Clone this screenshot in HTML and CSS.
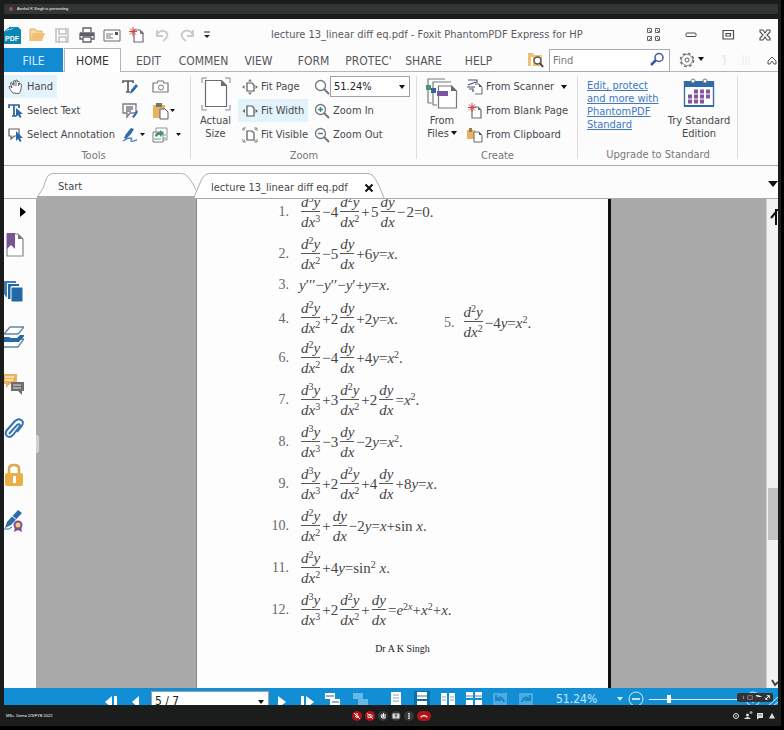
FILE: index.html
```html
<!DOCTYPE html>
<html lang="en">
<head>
<meta charset="utf-8">
<title>lecture 13_linear diff eq.pdf - Foxit PhantomPDF Express for HP</title>
<link rel="stylesheet" href="styles.css">
</head>
<body>
<div class="meeting">
  <header class="presenter"><div class="presenter-bar"><span class="presenter-dot"></span>Anshul K Singh is presenting</div></header>

  <div class="app">
    <div class="titlebar">
      <div class="quick">
        <svg class="logo" viewBox="0 0 17 17"><path d="M0 5 6 0H14L17 3V17H0Z" fill="#0a86b5"/><path d="M0 5 6 0 5 4Q8 3 11 0" fill="#fff" stroke="#0a86b5"/><text x="1" y="14" class="logo-text">PDF</text></svg>
        <button class="icon-btn" aria-label="Open"><svg viewBox="0 0 18 16"><path d="M2 14V2h5l1 2h6v3" fill="#f5d9a0" stroke="#dcae62"/><path d="M2 14 5 6h12l-3 8Z" fill="#f0c173"/></svg></button>
        <button class="icon-btn" aria-label="Save"><svg viewBox="0 0 18 16"><path d="M3 2h12v13H3Z M6 2v5h7V2 M6 15v-5h7v5" fill="none" stroke="#c3c1c8" stroke-width="1.6"/></svg></button>
        <button class="icon-btn" aria-label="Print"><svg viewBox="0 0 18 16"><path d="M5 5V1h8v4M2 6h14v6h-3M2 6v6h3M5 10h8v5H5Z" fill="#fff" stroke="#5d6068" stroke-width="1.3"/><path d="M2 6h14v3H2Z" fill="#5d6068"/></svg></button>
        <button class="icon-btn" aria-label="Email"><svg viewBox="0 0 18 16"><path d="M1 3h16v11H1Z" fill="#fff" stroke="#66686f"/><path d="M3 7h7M3 9h5M3 11h7" stroke="#777" /><path d="M12 5h3v3h-3Z" fill="#555"/></svg></button>
        <button class="icon-btn" aria-label="New"><svg viewBox="0 0 18 16"><path d="M6 3h6l3 3v9H6Z" fill="#fff" stroke="#6c6d73" stroke-width="1.2"/><path d="M12 3v4h4" fill="#777"/><path d="M5 0v9M1 4.500h8M2 1.500l6 6M8 1.500l-6 6" stroke="#d4453f"/></svg></button>
        <button class="icon-btn" aria-label="Undo"><svg viewBox="0 0 18 16"><path d="M4 3v6h6M4 9q-1-1 1-3q4-4 8-1q4 4-3 9" fill="none" stroke="#c9c9cd" stroke-width="1.8"/></svg></button>
        <button class="icon-btn" aria-label="Redo"><svg viewBox="0 0 18 16"><path d="M15 3v6H9M15 9q0-2-2-4q-4-3-8 0q-4 4 3 9" fill="none" stroke="#c9c9cd" stroke-width="1.8"/></svg></button>
        <button class="icon-btn slim" aria-label="Customize"><svg viewBox="0 0 8 16"><path d="M1 5h6" stroke="#222"/><path d="M1 8h6l-3 3Z" fill="#222"/></svg></button>
      </div>
      <h1 class="title">lecture 13_linear diff eq.pdf - Foxit PhantomPDF Express for HP</h1>
      <div class="window-btns">
        <button class="icon-btn" aria-label="Layout"><svg viewBox="0 0 16 16"><path d="M1.500 1.500h4v4h-4ZM9.500 1.500h4v4h-4ZM1.500 9.500h4v4h-4ZM9.500 9.500h4v4h-4ZM3 3l2 2M11 3l2 2M11 11l2 2M3 13l2-2" fill="none" stroke="#66666a"/></svg></button>
        <button class="icon-btn" aria-label="Minimize"><svg viewBox="0 0 16 16"><rect x="3" y="6" width="10" height="3.500" rx="1" fill="none" stroke="#4d4d50"/></svg></button>
        <button class="icon-btn" aria-label="Restore"><svg viewBox="0 0 16 16"><path d="M3 3.500h10.500v8.500H3Z M6 6.500h4.500v2.500H6Z" fill="none" stroke="#4d4d50" stroke-width="1.2"/></svg></button>
        <button class="icon-btn" aria-label="Close"><svg viewBox="0 0 16 16"><path d="M3 3h3l2 3 2-3h3v2l-3 3 3 3v2h-3L8 10l-2 3H3v-2l3-3-3-3Z" fill="none" stroke="#4d4d50" stroke-width="1.1"/></svg></button>
      </div>
    </div>

    <div class="menubar">
      <nav class="menu">
        <button class="file">FILE</button>
        <button class="home">HOME</button>
        <button>EDIT</button>
        <button>COMMEN</button>
        <button>VIEW</button>
        <button>FORM</button>
        <button>PROTEC'</button>
        <button>SHARE</button>
        <button>HELP</button>
      </nav>
      <div class="search">
        <svg class="i16" viewBox="0 0 16 16"><path d="M0 14V1h5l1 2h8v11Z" fill="#f0c173"/><path d="M3 14V5h2v9" fill="#fff"/><circle cx="9.500" cy="8.500" r="3.500" fill="#fff" stroke="#555" stroke-width="1.400"/><path d="m12 11 3 4" stroke="#444" stroke-width="2"/></svg>
        <label class="find"><input type="text" placeholder="Find" aria-label="Find"><svg class="i16" viewBox="0 0 16 16"><circle cx="10" cy="5.500" r="4" fill="#fff" stroke="#3c57a0" stroke-width="1.500"/><path d="M7 8 2 13" stroke="#3c57a0" stroke-width="2.500"/></svg></label>
        <button class="icon-btn gear" aria-label="Settings"><svg viewBox="0 0 26 16"><circle cx="8" cy="8" r="6.500" fill="none" stroke="#66666a" stroke-width="1.500" stroke-dasharray="2.800 2.300"/><circle cx="8" cy="8" r="5.500" fill="#fff" stroke="#77777b" stroke-width=".8"/><circle cx="8" cy="8" r="2" fill="none" stroke="#5a5a5e"/><path d="M19 5h6l-3 4Z" fill="#111"/></svg></button>
        <svg class="i16" viewBox="0 0 16 16"><path d="M4 3q5 4 2 10M6 3v3" stroke="#e2e2e5" fill="none"/></svg>
        <svg class="i16" viewBox="0 0 16 16"><path d="M4 3v10M7 3v10M10 5v8" stroke="#e9e9ec" fill="none"/></svg>
        <button class="icon-btn collapse" aria-label="Collapse ribbon"><svg viewBox="0 0 12 16"><path d="m2 9 4-4 4 4v3H8L6 9l-2 3H2Z" fill="none" stroke="#555"/></svg></button>
      </div>
    </div>

    <div class="ribbon">
      <section class="group tools">
        <div class="body">
          <div class="stack wide">
            <button class="cmd on"><svg class="i16" viewBox="0 0 16 16"><path d="M5 14Q1 10 1 7.500q1-1 3 1.500L2.500 4q1-2 2.500 2L5.500 2q1.500-1.500 2 1 0-2.500 1.500-2L9.500 3q1.500-1.500 2 .5v2q1.500-1.500 2 0L13 10q0 2-2 4.500Z M6 3v4M8 3v4M10.500 4v3" fill="#fff" stroke="#5f6368"/></svg>Hand</button>
            <button class="cmd"><svg class="i16" viewBox="0 0 16 16"><path d="M1 5V2h10v3M6 2v11M4 13h4" fill="none" stroke="#2c5f98" stroke-width="1.700"/><path d="M8 5v9l2-2 2 3 1.500-1-1.500-3h3Z" fill="#2b68a6"/></svg>Select Text</button>
            <button class="cmd"><svg class="i16" viewBox="0 0 16 16"><path d="M1 2h10v7H6L3 12V9H1Z" fill="#fff" stroke="#5c6068" stroke-width="1.200"/><path d="M8 4v10l2-2 2 3 1.500-1-1.500-3h3Z" fill="#2b68a6"/></svg>Select Annotation</button>
          </div>
          <div class="stack small">
            <button class="tool" aria-label="Typewriter"><svg viewBox="0 0 24 16"><path d="M1 4V2h10v2M6 2v11M4 13h4" fill="none" stroke="#5b5d62" stroke-width="1.700"/><path d="m8 15 1-4 5-6 2 2-5 6Z" fill="#2f6ba8"/></svg></button>
            <button class="tool" aria-label="Note"><svg viewBox="0 0 24 16"><path d="M1 1h13v9H8l-3 4v-4H1Z M4 4h7M4 6h7M4 8h5" fill="none" stroke="#777a83" stroke-width="1.300"/><path d="m10 14 5-7 1 2-4 6Z" fill="#2f6ba8"/></svg></button>
            <button class="tool" aria-label="Sign"><svg viewBox="0 0 24 16"><path d="m2 11 2-4 5-6 3 1-3 5-5 5Z" fill="#2f6ba8"/><path d="M1 14q4-3 7-3t1 2q-1 2 2 1l4-1" fill="none" stroke="#4a86bd" stroke-width="1.300"/><path d="M18 6h5l-2.500 3Z" fill="#111"/></svg></button>
          </div>
          <div class="stack small">
            <button class="tool" aria-label="Snapshot"><svg viewBox="0 0 28 16"><path d="M1 4h4l1-2h5l1 2h4v9H1Z" fill="#fff" stroke="#76777d" stroke-width="1.200"/><circle cx="9" cy="8.500" r="2.500" fill="none" stroke="#76777d"/></svg></button>
            <button class="tool" aria-label="Paste"><svg viewBox="0 0 28 16"><path d="M1 2h12v13H1Z" fill="#e6b363"/><path d="M4 0h6v4H4Z" fill="#7b7468"/><path d="M8 6h5l3 3v7H8Z" fill="#fff" stroke="#5d5e64"/><path d="M18 6h5l-2.500 3Z" fill="#111"/></svg></button>
            <button class="tool" aria-label="Stamp"><svg viewBox="0 0 28 16"><path d="M4 1h11v12H4Z" fill="#fff" stroke="#909399"/><path d="M1 5h10v10H1Z" fill="#fff" stroke="#77808a"/><path d="M3 9q0-4 5-4V3l4 3.500L8 10V8q-3 0-3 2Z" fill="#3f9a62"/><path d="M2 12h7M12 8h2M12 11h2" stroke="#6b9a7b"/><path d="M24 6h5l-2.500 3Z" fill="#111"/></svg></button>
          </div>
        </div>
        <h2>Tools</h2>
      </section>

      <section class="group zoom">
        <div class="body">
          <button class="big"><svg viewBox="0 0 30 34"><path d="M1 6V1h5M24 1h5v5M29 28v5h-5M6 33H1v-5" fill="none" stroke="#85878c"/><path d="M4.500 3.500h16l5 5v21h-21Z" fill="#fff" stroke="#6b6d73" stroke-width="1.200"/><path d="M20 3v6h6Z" fill="#6b6d73"/></svg><span>Actual Size</span></button>
          <div class="stack fit">
            <button class="cmd"><svg class="i16" viewBox="0 0 16 16"><path d="M5 4h5l2 2v6H5Z" fill="#fff" stroke="#55575c" stroke-width="1.200"/><path d="M6 2.500 8 0l2 2.500M6 13.500 8 16l2-2.500M2.500 6 0 8l2.500 2M13.500 6 16 8l-2.500 2" fill="#777"/></svg>Fit Page</button>
            <button class="cmd on"><svg class="i16" viewBox="0 0 16 16"><path d="M5 3h5l2 2v8H5Z" fill="#fff" stroke="#55575c" stroke-width="1.200"/><path d="M3 6 .500 8 3 10M13.500 6 16 8l-2.500 2" fill="#666"/></svg>Fit Width</button>
            <button class="cmd"><svg class="i16" viewBox="0 0 16 16"><path d="M5 4h5l2 2v7H5Z" fill="#fff" stroke="#55575c" stroke-width="1.200"/><path d="M1 4V1h3M1 1l2 2M12 1h3v3M15 1l-2 2M1 12v3h3M1 15l2-2M15 12v3h-3M15 15l-2-2" fill="none" stroke="#888"/></svg>Fit Visible</button>
          </div>
          <div class="stack">
            <div class="cmd flush"><svg class="i16" viewBox="0 0 16 16"><circle cx="6.500" cy="6.500" r="5" fill="#fff" stroke="#75777c" stroke-width="1.300"/><path d="m10 10 5 5" stroke="#75777c" stroke-width="2"/></svg>
              <div class="combo"><select aria-label="Zoom level"><option>51.24%</option></select><span class="caret"></span></div></div>
            <button class="cmd"><svg class="i16" viewBox="0 0 16 16"><circle cx="6.500" cy="6.500" r="5" fill="#fff" stroke="#75777c" stroke-width="1.300"/><path d="m10 10 5 5" stroke="#75777c" stroke-width="2"/><path d="M4 6.500h5M6.500 4v5" stroke="#3a8a88" stroke-width="1.500"/></svg>Zoom In</button>
            <button class="cmd"><svg class="i16" viewBox="0 0 16 16"><circle cx="6.500" cy="6.500" r="5" fill="#fff" stroke="#75777c" stroke-width="1.300"/><path d="m10 10 5 5" stroke="#75777c" stroke-width="2"/><path d="M4 6.500h5" stroke="#3a8a88" stroke-width="1.500"/></svg>Zoom Out</button>
          </div>
        </div>
        <h2>Zoom</h2>
      </section>

      <section class="group create">
        <div class="body">
          <button class="big"><svg viewBox="0 0 32 34"><path d="M2 26V2h17M2 26h4M7 28V5h18M7 28h4" fill="none" stroke="#77797f" stroke-width="1.200"/><path d="M12.500 9h13l5 5v17h-18Z" fill="#fff" stroke="#77797f" stroke-width="1.200"/><path d="M25 8v6h6Z" fill="#66686d"/><path d="M0 8h5v5H0Z" fill="#3f9b6c"/><path d="M5 11h5v5H5Z" fill="#2f64a0"/><path d="M11 14h11v5H11Z" fill="#7a55a6"/></svg><span>From Files<i class="caret near"></i></span></button>
          <div class="stack">
            <button class="cmd"><svg class="i16" viewBox="0 0 16 16"><path d="M1 1h9v3M1 6l8-3M0 8h8M2 10h4v3" fill="none" stroke="#4b5070" stroke-width="1.200"/><path d="M8 5h4l3 3v7H8" fill="#fff" stroke="#66686d"/><path d="M12 5v3h3Z" fill="#555"/></svg>From Scanner<i class="caret far"></i></button>
            <button class="cmd"><svg class="i16" viewBox="0 0 16 16"><path d="M5 4h6l3 3v8H5Z" fill="#fff" stroke="#6c6d73" stroke-width="1.200"/><path d="M11 4v3h3Z" fill="#666"/><path d="M5 0v9M1 4.500h8M2 1.500l6 6M8 1.500l-6 6" stroke="#d4453f"/></svg>From Blank Page</button>
            <button class="cmd"><svg class="i16" viewBox="0 0 16 16"><path d="M0 3h8v9H0Z" fill="#e6b363"/><path d="M2 1h3v4H2Z" fill="#9a7b4a"/><path d="M7 5h5l3 3v7H7Z" fill="#fff" stroke="#66686d"/><path d="M12 5v3h3Z" fill="#555"/></svg>From Clipboard</button>
          </div>
        </div>
        <h2>Create</h2>
      </section>

      <section class="group upgrade">
        <div class="body">
          <a class="promo" href="#">Edit, protect and more with PhantomPDF Standard</a>
          <button class="big"><svg viewBox="0 0 32 30"><path d="M1.500 4h29v24h-29Z" fill="#fff" stroke="#3a70a8" stroke-width="1.400"/><path d="M1 3h30v6H1Z" fill="#2e6ca8"/><path d="M1 27h30v2H1Z" fill="#2e6ca8"/><circle cx="10" cy="3" r="2" fill="#fff" stroke="#777"/><circle cx="22" cy="3" r="2" fill="#fff" stroke="#777"/><path d="M11 13.500h17M5 18.500h23M5 23.500h17" stroke="#8654a0" stroke-width="4" stroke-dasharray="4 2"/></svg><span>Try Standard Edition</span></button>
        </div>
        <h2>Upgrade to Standard</h2>
      </section>
    </div>

    <div class="doctabs">
      <button class="doctab start"><svg viewBox="0 0 162 26" preserveAspectRatio="none"><path d="M1 26Q7 18 9 8Q11 .500 17 .500H147Q154 2 161 19" fill="#fdfdfe" stroke="#a9abae"/></svg><span>Start</span></button>
      <button class="doctab current"><svg viewBox="0 0 192 26" preserveAspectRatio="none"><path d="M1 26Q5 14 9 6Q12 .500 18 .500H176Q182 .500 191 26" fill="#fff" stroke="#a9abae"/></svg><span>lecture 13_linear diff eq.pdf</span><svg class="x" viewBox="0 0 10 10"><path d="m1.500 1.500 7 7M8.500 1.500l-7 7" stroke="#111" stroke-width="2"/></svg></button>
      <button class="tab-more" aria-label="More tabs"><i class="caret large"></i></button>
    </div>

    <main class="viewer">
      <aside class="panels">
        <button aria-label="Expand" class="expand"><svg viewBox="0 0 8 10"><path d="M1 0v10l6-5Z" fill="#000"/></svg></button>
        <button aria-label="Bookmarks"><svg viewBox="0 0 20 24"><path d="M3 1h11l5 5v17H3Z" fill="#fff" stroke="#85868c" stroke-width="1.200"/><path d="M14 1v5h5Z" fill="#777"/><path d="M3 0h8v16l-4-4-4 4Z" fill="#7a5596"/></svg></button>
        <button aria-label="Pages"><svg viewBox="0 0 20 24"><path d="M0 2h12v3H4v13H2L0 15Z" fill="#3d7db4"/><path d="M3.500 4.500h12v3h-8v13h-4Z" fill="#2468a0" stroke="#fff"/><path d="M7 8h12v15H7Z" fill="#2269a8" stroke="#fff"/></svg></button>
        <button aria-label="Layers"><svg viewBox="0 0 20 24"><path d="M6 2h14l-6 7H0l6-7M0 22h14l6-8h-5" fill="#fff" stroke="#5f86a4" stroke-width="1.300"/><path d="M0 12h5l2 1h6l3-3h5l-6 7H0Z" fill="#2569a6"/></svg></button>
        <button aria-label="Comments"><svg viewBox="0 0 20 24"><path d="M0 3h13v10H6l-4 4v-4H0Z" fill="#e8b45a"/><path d="M1 6h9M1 9h8" stroke="#fff"/><path d="M7 11h13v9h-2v4l-4-4H7Z" fill="#706c70"/><path d="M9 14h8M9 17h8" stroke="#ddd"/></svg></button>
        <button aria-label="Attachments"><svg viewBox="0 0 20 24"><path d="m5 17 8-9q3-2 3 1l-7 9q-4 4-7 0-1-3 1-5l8-9q5-4 8 1 0 3-2 5l-4 5" fill="none" stroke="#3273ad" stroke-width="1.900"/></svg></button>
        <button aria-label="Security"><svg viewBox="0 0 20 24"><path d="M5 11V6q0-4 5-4t5 4v5" fill="none" stroke="#dfa848" stroke-width="2.500"/><rect x="1" y="10" width="18" height="13" rx="2" fill="#e9af46"/><path d="M9 13h3v7H9Z" fill="#fff"/></svg></button>
        <button aria-label="Signatures"><svg viewBox="0 0 20 24"><path d="m1 19 2-6L14 1l4 3L7 16Z" fill="#2c6ba8"/><path d="m8 7 5 4" stroke="#fff"/><path d="M0 20q6 1 8-2" fill="none" stroke="#2c6ba8"/><path d="m11 18-1 5 4-2 4 2-1-5Z" fill="#77509a"/><circle cx="14" cy="16" r="3.500" fill="#f2d16a" stroke="#77509a" stroke-width="2"/></svg></button>
      </aside>
      <div class="canvas left"><span class="grip"></span></div>
      <article class="page">
        <ol class="problems">
          <li><b>1.</b><div class="eq"><span class="f"><span>d<sup>3</sup>y</span><span>dx<sup>3</sup></span></span>−4<span class="f"><span>d<sup>2</sup>y</span><span>dx<sup>2</sup></span></span>+&#8202;5<span class="f"><span>dy</span><span>dx</span></span>−&#8202;2=0.</div></li>
          <li><b>2.</b><div class="eq"><span class="f"><span>d<sup>2</sup>y</span><span>dx<sup>2</sup></span></span>−5<span class="f"><span>dy</span><span>dx</span></span>+<span>6<i>y</i>=<i>x</i>.</span></div></li>
          <li class="short"><b>3.</b><div class="eq"><span><i>y</i>′′′−<i>y</i>′′−<i>y</i>′+<i>y</i>=<i>x</i>.</span></div></li>
          <li><b>4.</b><div class="eq"><span class="f"><span>d<sup>2</sup>y</span><span>dx<sup>2</sup></span></span>+2<span class="f"><span>dy</span><span>dx</span></span>+<span>2<i>y</i>=<i>x</i>.</span></div>
            <div class="second"><b>5.</b><div class="eq"><span class="f"><span>d<sup>2</sup>y</span><span>dx<sup>2</sup></span></span><span>−4<i>y</i>=<i>x</i><sup>2</sup>.</span></div></div></li>
          <li><b>6.</b><div class="eq"><span class="f"><span>d<sup>2</sup>y</span><span>dx<sup>2</sup></span></span>−4<span class="f"><span>dy</span><span>dx</span></span><span>+4<i>y</i>=<i>x</i><sup>2</sup>.</span></div></li>
          <li><b>7.</b><div class="eq"><span class="f"><span>d<sup>3</sup>y</span><span>dx<sup>3</sup></span></span>+3<span class="f"><span>d<sup>2</sup>y</span><span>dx<sup>2</sup></span></span>+2<span class="f"><span>dy</span><span>dx</span></span><span>=<i>x</i><sup>2</sup>.</span></div></li>
          <li><b>8.</b><div class="eq"><span class="f"><span>d<sup>3</sup>y</span><span>dx<sup>3</sup></span></span>−3<span class="f"><span>dy</span><span>dx</span></span><span>−2<i>y</i>=<i>x</i><sup>2</sup>.</span></div></li>
          <li><b>9.</b><div class="eq"><span class="f"><span>d<sup>3</sup>y</span><span>dx<sup>3</sup></span></span>+2<span class="f"><span>d<sup>2</sup>y</span><span>dx<sup>2</sup></span></span>+4<span class="f"><span>dy</span><span>dx</span></span><span>+8<i>y</i>=<i>x</i>.</span></div></li>
          <li><b>10.</b><div class="eq"><span class="f"><span>d<sup>2</sup>y</span><span>dx<sup>2</sup></span></span>+<span class="f"><span>dy</span><span>dx</span></span><span>−2<i>y</i>=<i>x</i>+sin <i>x</i>.</span></div></li>
          <li><b>11.</b><div class="eq"><span class="f"><span>d<sup>2</sup>y</span><span>dx<sup>2</sup></span></span><span>+4<i>y</i>=sin<sup>2</sup> <i>x</i>.</span></div></li>
          <li><b>12.</b><div class="eq"><span class="f"><span>d<sup>3</sup>y</span><span>dx<sup>3</sup></span></span>+2<span class="f"><span>d<sup>2</sup>y</span><span>dx<sup>2</sup></span></span>+<span class="f"><span>dy</span><span>dx</span></span><span>=<i>e</i><sup>2<i>x</i></sup>+<i>x</i><sup>2</sup>+<i>x</i>.</span></div></li>
        </ol>
        <p class="author">Dr A K Singh</p>
      </article>
      <div class="canvas right"></div>
      <div class="scroll"><svg viewBox="0 0 12 26"><path d="m4 19 5-6M9 26V11h3" fill="none" stroke="#111" stroke-width="2"/></svg><span class="thumb"></span><svg class="down" viewBox="0 0 12 10"><path d="m5 2 3 5 3-3" fill="none" stroke="#444" stroke-width="2"/></svg></div>
    </main>

    <footer class="status">
      <div class="pager">
        <button aria-label="First page"><svg viewBox="0 0 16 16"><path d="M9 2v12L2 8Z M11 2h3v12h-3Z" fill="#fff"/></svg></button>
        <button aria-label="Previous page"><svg viewBox="0 0 16 16"><path d="M12 2v12L5 8Z" fill="#fff"/></svg></button>
        <div class="combo page-no"><select aria-label="Page"><option>5 / 7</option></select><span class="caret"></span></div>
        <button aria-label="Next page"><svg viewBox="0 0 16 16"><path d="M1 2v12l8-6Z" fill="#fff"/></svg></button>
        <button aria-label="Last page"><svg viewBox="0 0 16 16"><path d="M5 2v12l8-6Z M0 2h3v12H0Z" fill="#fff"/></svg></button>
      </div>
      <div class="nav-views">
        <button aria-label="Previous view"><svg viewBox="0 0 16 16"><path d="M1 2h10v6H1ZM6 8h10v6H6Z" fill="#fff"/><path d="M2 5h8M8 11h7" stroke="#356078"/></svg></button>
        <button aria-label="Next view" class="faint"><svg viewBox="0 0 16 16"><path d="M1 2h10v6H1ZM6 8h10v6H6Z" fill="#8acbee"/></svg></button>
      </div>
      <div class="layouts">
        <button aria-label="Single page"><svg viewBox="0 0 16 16"><path d="M3 1h10v15H3Z" fill="#fff"/><path d="M5 4h6M5 7h6M5 10h6" stroke="#82aabf"/></svg></button>
        <button aria-label="Continuous" class="active"><svg viewBox="0 0 16 16"><path d="M3 1h10v7H3ZM3 10h10v6H3Z" fill="#fff"/><path d="M3 5h10" stroke="#4d6b7c"/></svg></button>
        <button aria-label="Facing"><svg viewBox="0 0 16 16"><path d="M1 2h6v14H1ZM9 2h6v14H9Z" fill="#fff"/><path d="M2 6h4M2 9h4M10 6h4M10 9h4" stroke="#82aabf"/></svg></button>
        <button aria-label="Continuous facing"><svg viewBox="0 0 16 16"><path d="M0 1h7v6H0ZM9 1h7v6H9ZM0 9h7v7H0ZM9 9h7v7H9Z" fill="#fff"/><path d="M0 5h16" stroke="#4d8aab"/></svg></button>
        <button aria-label="Rotate left" class="faint"><svg viewBox="0 0 16 16"><path d="M1 2h14v14H1Z" fill="#62b9e8"/><path d="M4 4v5h5M4 9q5-6 8 2" fill="none" stroke="#1684c2" stroke-width="2"/></svg></button>
        <button aria-label="Rotate right" class="faint"><svg viewBox="0 0 16 16"><path d="M1 2h14v14H1Z" fill="#62b9e8"/><path d="M12 4v5H7M12 9Q7 3 4 11" fill="none" stroke="#1684c2" stroke-width="2"/></svg></button>
      </div>
      <div class="zoomer">
        <span class="percent">51.24%</span><i class="caret pale"></i>
        <button aria-label="Zoom out"><svg viewBox="0 0 16 16"><circle cx="8" cy="8" r="7" fill="none" stroke="#cdeafa"/><path d="M4 8h8" stroke="#fff" stroke-width="1.500"/></svg></button>
        <input type="range" min="0" max="100" value="20" aria-label="Zoom">
        <button aria-label="Zoom in"><svg viewBox="0 0 16 16"><circle cx="8" cy="8" r="7" fill="none" stroke="#cdeafa"/><path d="M4 8h8M8 4v8" stroke="#fff"/></svg></button>
        <svg class="resize" viewBox="0 0 12 16"><path d="m2 15 10-9M7 15l5-4" stroke="#d6eefb"/></svg>
      </div>
      <div class="overlay"><svg viewBox="0 0 36 10"><path d="M5 3v4" stroke="#999"/><path d="M10 3h5v4h-5Z" fill="none" stroke="#888"/><path d="M19 2.500h3l4 2h-3l-4-1Z" fill="#fff"/><path d="m30 7 4-4M31 3h3v3M30 5v2h2" stroke="#fff" fill="none"/></svg></div>
    </footer>
  </div>

  <footer class="callbar">
    <span class="room">MSc. Demo 2/3/FYB 2022</span>
    <div class="call-btns">
      <button class="round red" aria-label="Mute"><svg viewBox="0 0 10 10"><path d="M5 2v3M3 5q2 3 4 0M2 2l6 6" stroke="#fff" fill="none"/></svg></button>
      <button class="round red" aria-label="Camera"><svg viewBox="0 0 10 10"><path d="M3 3.500h3v3H3ZM7 4v2M2 2l6 6" stroke="#f3c7c5" fill="none"/></svg></button>
      <button class="round" aria-label="Raise hand"><svg viewBox="0 0 10 10"><path d="M3 4l1 3h3V3M5.500 2v4M4 3v3" stroke="#fff" fill="none"/></svg></button>
      <button class="round" aria-label="Present"><svg viewBox="0 0 10 10"><path d="M1.500 2.500h7v5h-7Z" fill="#ddd"/><path d="M5 6.500v-3M4 4.500 5 3.500l1 1" stroke="#333" fill="none"/></svg></button>
      <button class="round" aria-label="More"><svg viewBox="0 0 10 10"><path d="M5 2v6" stroke="#fff" stroke-width="1.500" stroke-dasharray="1.500 .8"/></svg></button>
      <button class="round red pill" aria-label="Leave call"><svg viewBox="0 0 10 10"><path d="M1 6q4-4 8 0L7 6.500V5.500H3v1Z" fill="#fff"/></svg></button>
    </div>
    <div class="side-btns">
      <svg viewBox="0 0 10 10"><circle cx="5" cy="5" r="2.500" fill="none" stroke="#ddd"/><path d="M5 4v2" stroke="#ddd"/></svg>
      <svg viewBox="0 0 10 10"><circle cx="4.500" cy="4" r="1.500" fill="#ddd"/><path d="M1 8q3.500-4 7 0Z" fill="#ddd"/><circle cx="8" cy="1.500" r="1.500" fill="#999"/></svg>
      <svg viewBox="0 0 10 10"><path d="M2 2h6v5H4L2 8.500Z" fill="#ddd"/><path d="M3 4h4" stroke="#777"/></svg>
      <svg viewBox="0 0 10 10"><path d="m5 2 3 5.500H2Z" fill="#ddd"/></svg>
    </div>
  </footer>
</div>
</body>
</html>
```
FILE: styles.css
```css
* { box-sizing: border-box; }

body {
  margin: 0;
  background: #000;
  color: #48484c;
  font: 11px/13px "DejaVu Sans Condensed", "DejaVu Sans", sans-serif;
}

button, input, select { font: inherit; color: inherit; }

button {
  margin: 0;
  padding: 0;
  border: 0;
  background: none;
}

svg { display: block; flex: none; }

h1, h2, p, ol { margin: 0; padding: 0; font-weight: normal; }

.meeting {
  display: flex;
  flex-direction: column;
  height: 100vh;
  padding-bottom: 4px;
  border-right: 3px solid #000;
  background: linear-gradient(#1b1d1d, #1b1d1d) content-box, #000;
}

/* Presenter strip */
.presenter { flex: none; height: 19px; padding: 4px 3px 5px 4px; }

.presenter-bar {
  display: flex;
  align-items: center;
  gap: 4px;
  height: 10px;
  padding-left: 5px;
  border-radius: 2px;
  background: #333535;
  color: #fff;
  font: 4px/10px "Liberation Sans", sans-serif;
}

.presenter-dot { width: 4px; height: 4px; border-radius: 50%; background: #8d5552; }

/* Application window */
.app {
  flex: 1;
  display: flex;
  flex-direction: column;
  min-height: 0;
  margin: 0 3px 0 4px;
  background: #fcfcfd;
}

.i16 { width: 16px; height: 16px; }

.icon-btn { width: 18px; height: 16px; }
.icon-btn svg { width: 100%; height: 16px; }

.titlebar {
  display: flex;
  align-items: center;
  flex: none;
  height: 29px;
  padding-top: 3px;
}

.quick { display: flex; align-items: center; gap: 7px; width: 267px; }
.quick .slim { width: 8px; }
.logo { width: 17px; height: 17px; }
.logo-text { font: bold 7px "Liberation Sans", sans-serif; fill: #fff; }
.title { flex: 1; font-size: 11px; line-height: 16px; white-space: nowrap; color: #5a5a5e; }
.window-btns { display: flex; gap: 19px; padding-right: 4px; }

.menubar {
  display: flex;
  align-items: stretch;
  flex: none;
  height: 24px;
  background: linear-gradient(#b4b5b8, #b4b5b8) bottom / 100% 1px no-repeat;
}

.menu {
  display: grid;
  grid-template-columns: 59px 58px repeat(7, 55px);
  flex: 1;
  font-size: 12px;
  color: #55555a;
}

.menu button { padding-top: 2px; }
.menu .file { background: #138bd3; color: #d8efff; }
.menu .home { border: 1px solid #b4b5b8; border-bottom: 0; margin-left: 1px; background: #fff; color: #333; }

.search { display: flex; align-items: center; gap: 5px; }

.find {
  display: flex;
  align-items: center;
  width: 121px;
  height: 23px;
  padding: 0 4px 0 3px;
  border: 1px solid #a9abb0;
  background: #fff;
}

.find input { flex: 1; min-width: 0; border: 0; padding: 0; background: none; outline: 0; }
.find input::placeholder { color: #77777b; }
.gear { width: 26px; margin: 0 8px 0 4px; }
.collapse { width: 12px; margin-left: 6px; }

/* Ribbon */
.ribbon { display: flex; flex: none; height: 94px; border-bottom: 1px solid #a9abae; }

.group { display: flex; flex-direction: column; position: relative; padding-top: 3px; }

.group::after {
  content: "";
  position: absolute;
  top: 4px;
  right: 0;
  bottom: 6px;
  border-right: 1px solid #dddde0;
}

.group h2 { font-size: 11px; line-height: 20px; text-align: center; color: #77777b; }
.tools h2 { padding-right: 8px; }

.body { display: flex; height: 72px; }
.tools { width: 187px; }
.zoom { width: 226px; }
.create { width: 161px; }
.upgrade { width: 160px; }

.stack { display: flex; flex-direction: column; gap: 1px; }
.wide { width: 114px; }
.small { width: 30px; padding-left: 4px; }
.tool { height: 23px; }
.tool svg { height: 16px; overflow: visible; }

.cmd {
  display: flex;
  align-items: center;
  align-self: flex-start;
  gap: 3px;
  height: 23px;
  padding: 0 4px;
  white-space: nowrap;
}

.cmd.on { background: #e2f3fc; }
.cmd.flush { gap: 0; padding-right: 0; }

.big { display: flex; flex-direction: column; align-items: center; }
.big svg { height: 34px; margin-bottom: 3px; }
.big span { display: block; }
.zoom .big { width: 47px; padding: 2px 4px 0 6px; }
.zoom .big svg { width: 30px; }
.create .big { width: 46px; padding: 2px 4px 0 8px; }
.create .big svg { width: 32px; }
.upgrade .big { width: 74px; padding-top: 2px; }
.upgrade .big svg { width: 32px; padding-bottom: 2px; }
.fit { width: 72px; }

.caret {
  display: inline-block;
  border: 3px solid transparent;
  border-top: 4px solid #111;
  border-bottom: 0;
}

.caret.near { margin: 0 0 2px 2px; }
.caret.far { margin-left: 4px; }
.caret.pale { border-top-color: #cdeafa; }
.caret.large { border-width: 6px 5px 0; }

.combo {
  display: flex;
  align-items: center;
  width: 80px;
  height: 21px;
  padding-right: 4px;
  border: 1px solid #9fa1a6;
  background: #fff;
}

.combo select {
  flex: 1;
  min-width: 0;
  appearance: none;
  border: 0;
  padding: 0 0 0 3px;
  background: none;
  color: #222;
}

.promo { width: 84px; padding: 4px 0 0 9px; line-height: 13px; color: #3f78c4; }

/* Document tabs */
.doctabs { display: flex; align-items: flex-end; flex: none; height: 33px; padding-left: 33px; border-bottom: 1px solid #a9abae; }
.doctab { display: flex; align-items: center; position: relative; height: 25px; text-align: left; white-space: nowrap; }
.doctab > svg:first-child { position: absolute; inset: 0; width: 100%; height: 100%; }
.doctab span { position: relative; padding-top: 4px; }
.start { width: 160px; padding-left: 21px; border-bottom: 2px solid #a9a8aa; }
.current { width: 192px; padding-left: 18px; margin-left: -4px; }
.doctab .x { position: relative; width: 10px; height: 10px; margin: 5px 0 0 16px; }
.tab-more { margin: 0 0 11px auto; line-height: 6px; }

/* Viewer */
.viewer {
  display: grid;
  grid-template-columns: 32px 160fr 415fr 155fr 12px;
  flex: 1;
  min-height: 0;
  overflow: hidden;
}

.panels { display: flex; flex-direction: column; gap: 22px; }
.panels button { width: 20px; height: 24px; }
.panels button svg { width: 20px; height: 24px; }
.panels .expand { height: 10px; margin: 8px 0 -6px 15px; width: 8px; }
.panels .expand svg { width: 8px; height: 10px; }

.canvas { background: #aaa9aa; }
.left { display: flex; align-items: center; }
.grip { width: 3px; height: 18px; border-radius: 0 3px 3px 0; background: #d0d0d0; }

.page {
  overflow: hidden;
  border-left: 1px solid #888;
  border-right: 3px solid #111;
  background: #fdfdfe;
  color: #454548;
  font: 14px/18px "Liberation Serif", serif;
}

.problems { list-style: none; margin-top: -8px; }

.problems li {
  display: grid;
  grid-template-columns: 92px 164px 1fr;
  align-items: center;
  height: 42px;
  column-gap: 10px;
}

.problems .short { height: 20px; }
.problems b { font-weight: normal; text-align: right; color: #66666a; }
.eq { display: flex; align-items: center; white-space: nowrap; font-size: 15px; }
.second { display: flex; align-items: center; gap: 7px; margin-left: -29px; padding-top: 8px; }

.f {
  display: inline-flex;
  flex-direction: column;
  margin: 0 2px;
  font-style: italic;
}

.f > span { line-height: 18px; text-align: center; }
.f > span + span { border-top: 1px solid #55555a; line-height: 20px; }
.eq sup { font-size: 10px; line-height: 0; vertical-align: 5px; font-style: normal; }
.author { padding: 9px 0 0; font-size: 10px; text-align: center; color: #222; }

.scroll { display: flex; flex-direction: column; border-left: 1px solid #ccc; background: #f1f1f1; }
.scroll svg { width: 12px; height: 26px; }
.thumb { height: 52px; margin: auto 0 0 1px; background: #c3c3c4; }
.scroll .down { height: 10px; margin-top: 138px; }

/* Status bar */
.status {
  display: flex;
  align-items: flex-start;
  position: relative;
  flex: none;
  height: 17px;
  padding: 3px 0 0 99px;
  overflow: hidden;
  background: #128fd4;
}

.status svg { width: 16px; height: 16px; }
.pager { display: flex; gap: 8px; }
.page-no { width: 118px; }
.page-no select { font-size: 12px; }
.nav-views { display: flex; gap: 12px; margin-left: 7px; }
.layouts { display: flex; gap: 10px; margin-left: 20px; }
.active { background: #0b6fa9; }
.faint { opacity: .7; }
.zoomer { display: flex; align-items: center; gap: 5px; flex: 1; min-width: 0; margin-left: 22px; height: 16px; }
.percent { margin-right: 15px; font-size: 12px; color: #c4e6f8; }

.zoomer input { appearance: none; flex: 1; min-width: 0; height: 8px; margin: 0; background: linear-gradient(#e4f4fc, #e4f4fc) center / 100% 1px no-repeat; }
.zoomer input::-webkit-slider-thumb { appearance: none; width: 4px; height: 8px; background: #fff; }
.zoomer .resize { width: 12px; }

.overlay { position: absolute; right: 5px; top: 5px; border-radius: 2px; background: #303236; }
.overlay svg { width: 36px; height: 9px; }

/* Call controls */
.callbar {
  display: grid;
  grid-template-columns: 1fr auto 1fr;
  align-items: center;
  flex: none;
  height: 21px;
  padding: 0 4px 0 6px;
}

.room { color: #fff; font: 4px/8px "Liberation Sans", sans-serif; }
.call-btns { display: flex; gap: 3px; }
.round { display: flex; justify-content: center; width: 10px; height: 10px; border-radius: 5px; background: #36383a; }
.round svg { width: 10px; height: 10px; }
.red { background: #b31419; }
.pill { width: 14px; }
.side-btns { display: flex; justify-content: flex-end; gap: 2px; }
.side-btns svg { width: 10px; height: 10px; }
```
